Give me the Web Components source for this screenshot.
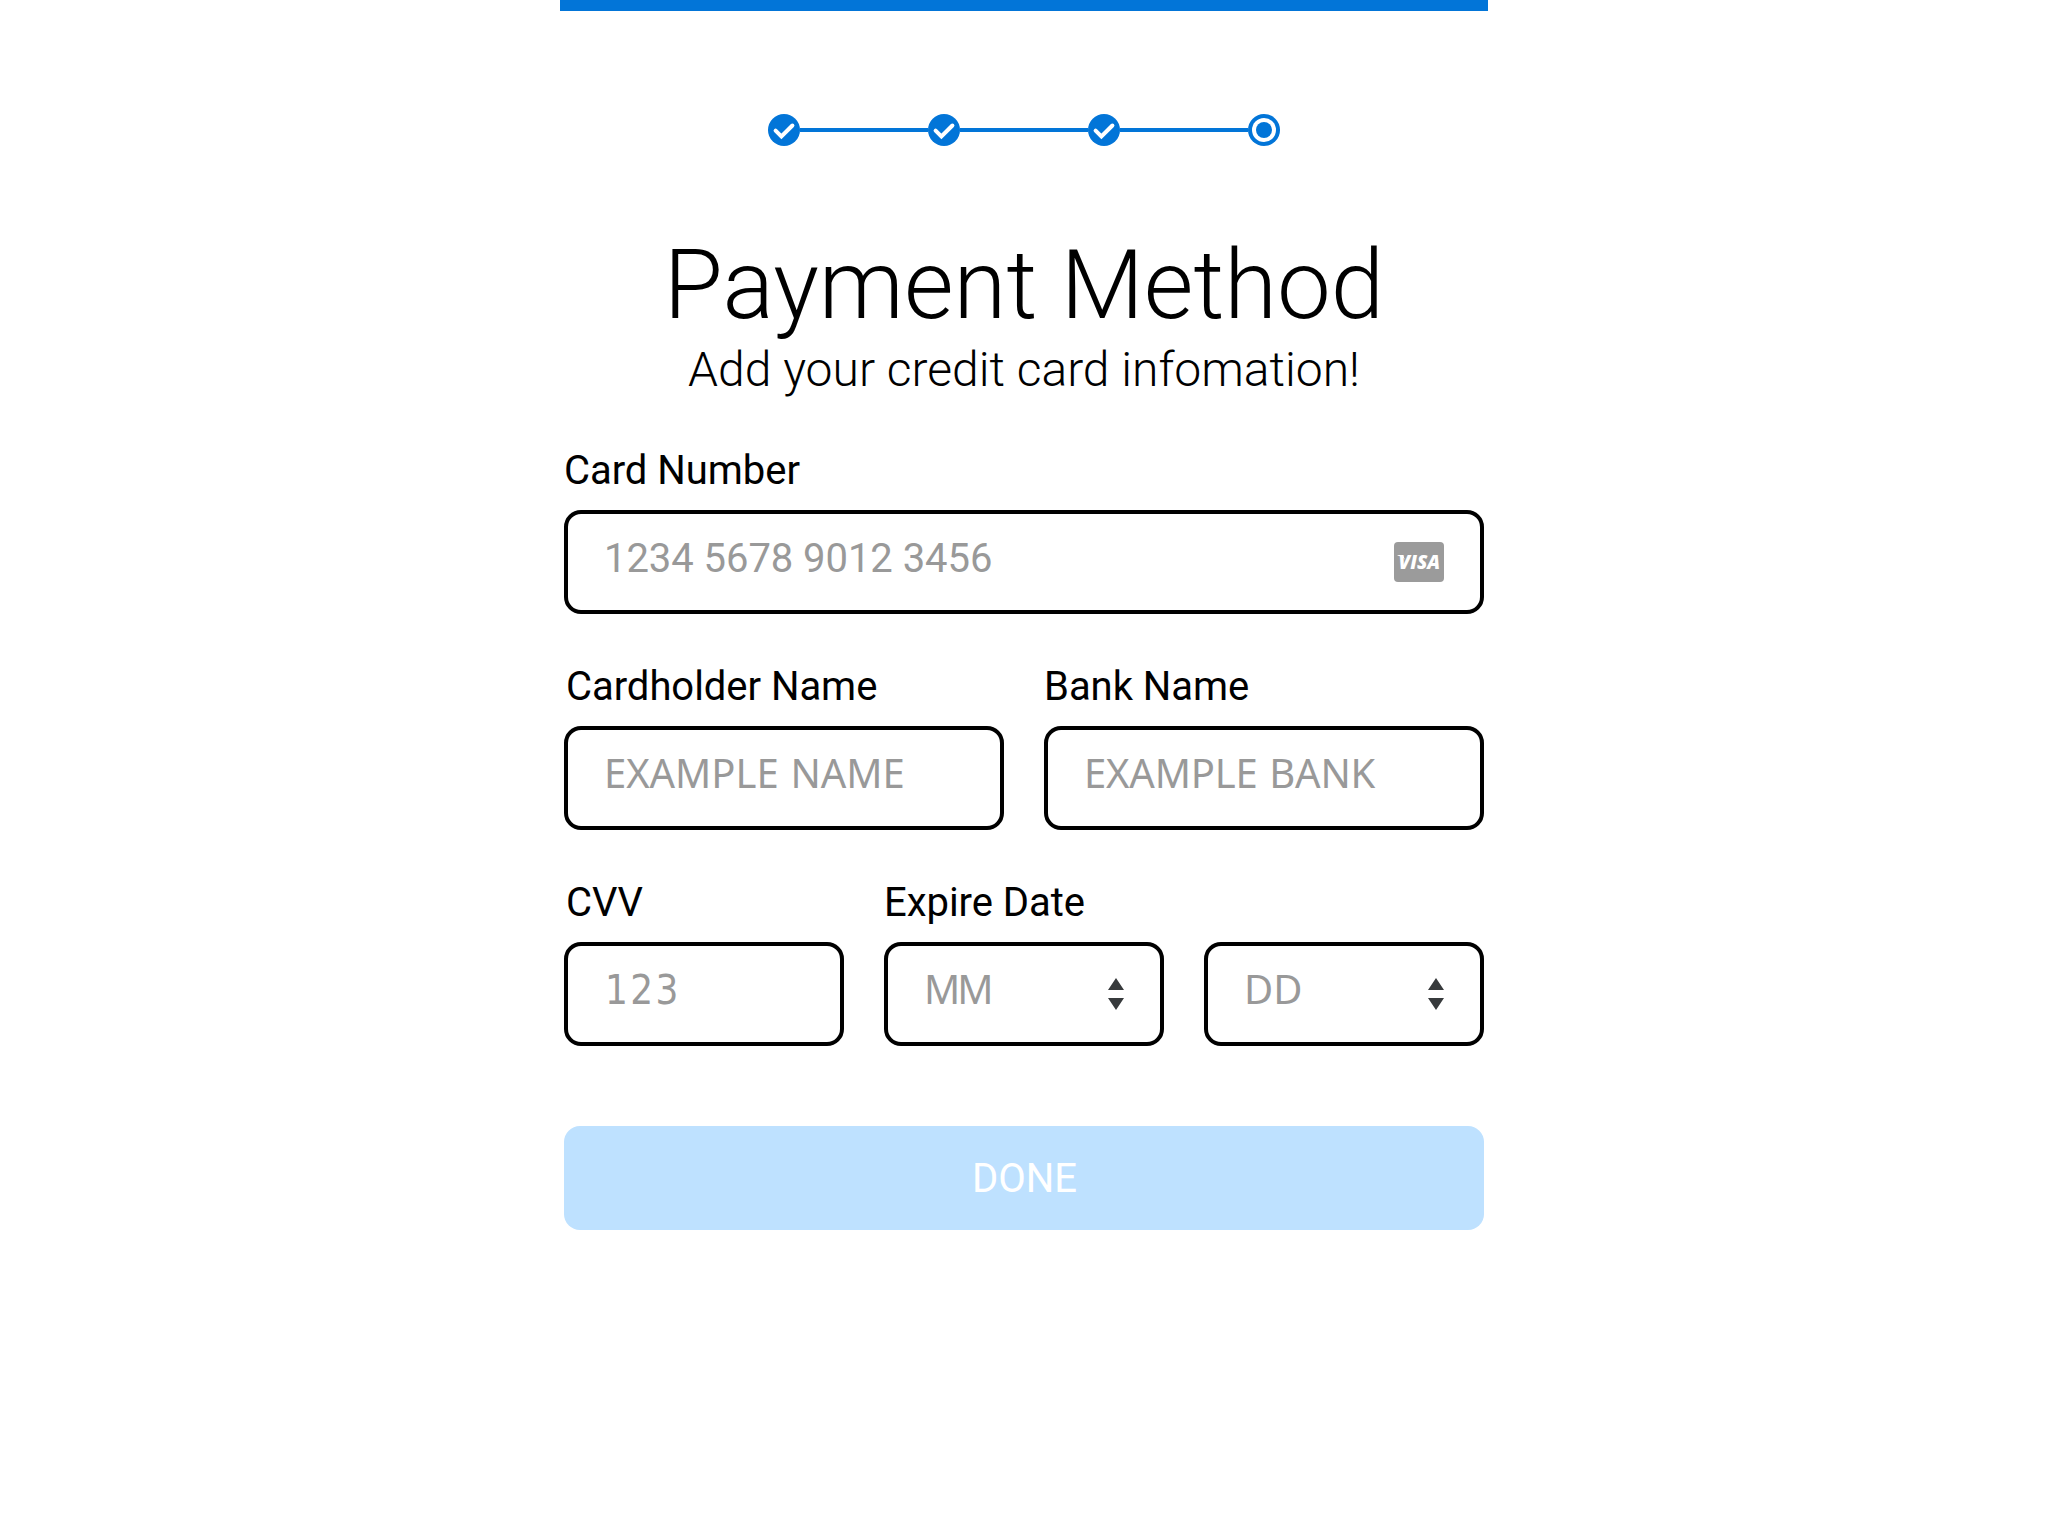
<!DOCTYPE html>
<html lang="en">
<head>
<meta charset="utf-8">
<title>Payment Method</title>
<style>
  html, body { margin: 0; background: #fff; }
  body { min-height: 1536px; color: #000; font-family: Roboto, "Liberation Sans", sans-serif; font-size: 40px; }
</style>
</head>
<body>
<payment-page></payment-page>
<script>
const define = (name, html, setup) => {
  const template = document.createElement('template');
  template.innerHTML = html;
  customElements.define(name, class extends HTMLElement {
    constructor() {
      super();
      this.attachShadow({ mode: 'open' }).append(template.content.cloneNode(true));
    }
    connectedCallback() { if (setup) setup(this, this.shadowRoot); }
  });
};

define('step-dot', `
  <style>
    :host { display: block; flex: none; width: 32px; height: 32px; }
    svg { display: block; }
    .ring, :host([current]) .done { display: none; }
    :host([current]) .ring { display: block; }
  </style>
  <svg width="32" height="32" viewBox="0 0 32 32">
    <circle cx="16" cy="16" r="16" fill="#0275d8"/>
    <path class="done" d="M7.6 16.7 L13.4 22.5 L24.4 11.5" fill="none" stroke="#fff" stroke-width="4" stroke-linecap="round"/>
    <g class="ring"><circle cx="16" cy="16" r="12" fill="#fff"/><circle cx="16" cy="16" r="8" fill="#0275d8"/></g>
  </svg>`);

define('step-progress', `
  <style>
    :host { display: flex; align-items: center; width: 512px; }
    .line { flex: 1; height: 4px; background: #0275d8; }
  </style>
  <step-dot></step-dot><div class="line"></div>
  <step-dot></step-dot><div class="line"></div>
  <step-dot></step-dot><div class="line"></div>
  <step-dot current></step-dot>`);

define('form-field', `
  <style>
    :host { display: flex; flex-direction: column; gap: 16px; flex: 1 1 0; min-width: 0; }
    label { height: 48px; line-height: 50px; letter-spacing: -.04px; white-space: nowrap; padding-left: var(--label-indent, 0); }
    .box { box-sizing: border-box; height: 104px; border: 4px solid #000; border-radius: 17px;
           padding: 0 36px; display: flex; align-items: center; justify-content: space-between; }
    .hint { color: #999; white-space: nowrap; line-height: 48px; padding-bottom: 6px;
            letter-spacing: var(--tracking, -.06px); }
    :host([face="humanist"]) .hint { font-family: "Noto Sans", sans-serif; padding-bottom: 11px; word-spacing: 1.5px; }
    :host([face="digits"]) .hint { font-family: "DejaVu Sans Condensed", "DejaVu Sans", sans-serif; font-stretch: condensed; padding: 0 0 8px 1px; }
  </style>
  <label></label>
  <div class="box"><span class="hint"></span><slot></slot></div>`,
  (host, root) => {
    root.querySelector('label').textContent = host.getAttribute('label') || '';
    root.querySelector('.hint').textContent = host.getAttribute('hint') || '';
  });

define('sort-arrows', `
  <style>:host { display: block; flex: none; } svg { display: block; }</style>
  <svg width="16" height="32" viewBox="0 0 16 32" fill="#373a3c"><path d="M8 0L16 12H0zM0 20H16L8 32z"/></svg>`);

define('visa-badge', `
  <style>:host { display: block; flex: none; } svg { display: block; }</style>
  <svg width="50" height="40" viewBox="0 0 50 40">
    <rect width="50" height="40" rx="4" fill="#9b9b9b"/>
    <path d="M3.5 13H9L11 18C9.5 15.8 7 14.2 3.5 13.6z" fill="#fff"/>
    <text x="4.6" y="27" textLength="41.5" lengthAdjust="spacingAndGlyphs" fill="#fff"
      font-family="Open Sans, sans-serif" font-size="20" font-weight="800" font-style="italic">VISA</text>
  </svg>`);

define('form-row', `
  <style>:host { display: flex; gap: 40px; }</style><slot></slot>`);

define('action-button', `
  <style>
    :host { display: block; }
    button { display: block; box-sizing: border-box; width: 100%; height: 104px; border: 0; border-radius: 16px; padding: 2px 0 0 1px;
             background: #bee1ff; color: #fff; font: inherit; line-height: 102px; text-align: center; }
  </style>
  <button type="button"><slot></slot></button>`);

define('payment-page', `
  <style>
    :host { display: flex; flex-direction: column; align-items: center; }
    .bar { width: 928px; height: 11px; background: #0275d8; }
    step-progress { margin-top: 103px; }
    h1 { margin: 84px 0 0; font-size: 96px; font-weight: 300; line-height: 110px; white-space: nowrap; }
    p { margin: 0; font-size: 48px; font-weight: 300; line-height: 60px; white-space: nowrap; }
    form { width: 920px; margin-top: 46px; display: flex; flex-direction: column; gap: 48px; }
    action-button { margin-top: 32px; }
  </style>
  <div class="bar"></div>
  <step-progress></step-progress>
  <h1>Payment Method</h1>
  <p>Add your credit card infomation!</p>
  <form>
    <form-row><form-field label="Card Number" hint="1234 5678 9012 3456"><visa-badge></visa-badge></form-field></form-row>
    <form-row>
      <form-field label="Cardholder Name" hint="EXAMPLE NAME" face="humanist" style="--label-indent:2px;--tracking:-.05px"></form-field>
      <form-field label="Bank Name" hint="EXAMPLE BANK" face="humanist" style="--tracking:-.2px"></form-field>
    </form-row>
    <form-row>
      <form-field label="CVV" hint="123" face="digits" style="--label-indent:2px;--tracking:2.4px"></form-field>
      <form-field label="Expire Date" hint="MM" face="humanist" style="--tracking:-3px"><sort-arrows></sort-arrows></form-field>
      <form-field hint="DD" face="humanist" style="--tracking:0"><sort-arrows></sort-arrows></form-field>
    </form-row>
    <action-button>DONE</action-button>
  </form>`);
</script>
</body>
</html>
